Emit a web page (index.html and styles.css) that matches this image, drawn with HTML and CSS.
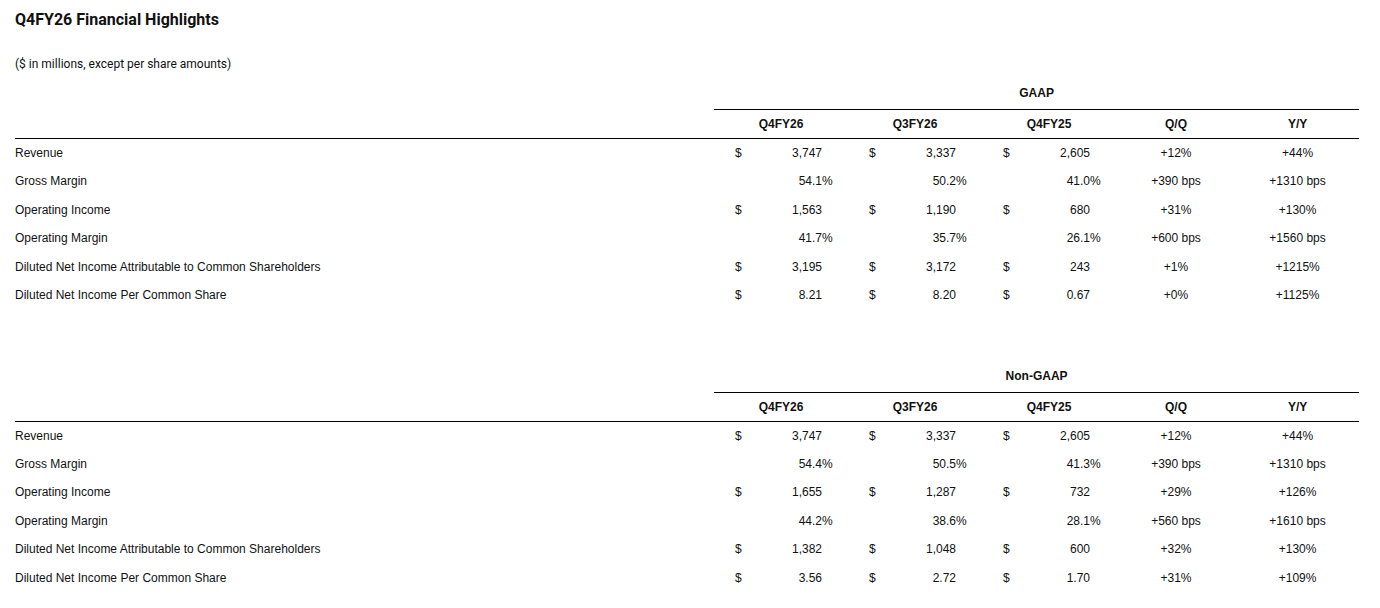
FILE: index.html
```html
<!DOCTYPE html>
<html lang="en">
<head>
<meta charset="utf-8">
<title>Q4FY26 Financial Highlights</title>
<link rel="stylesheet" href="styles.css">
</head>
<body>
<main class="page">
  <h1 class="title">Q4FY26 Financial Highlights</h1>
  <p class="note">($ in millions, except per share amounts)</p>

  <table class="fin">
    <colgroup>
      <col class="c-label">
      <col class="c-cur"><col class="c-num"><col class="c-suf">
      <col class="c-cur"><col class="c-num"><col class="c-suf">
      <col class="c-cur"><col class="c-num"><col class="c-suf">
      <col class="c-qq"><col class="c-yy">
    </colgroup>
    <thead>
      <tr class="group-row"><th class="blank"></th><th class="group" colspan="11">GAAP</th></tr>
      <tr class="head-row">
        <th class="blank"></th>
        <th colspan="3">Q4FY26</th><th colspan="3">Q3FY26</th><th colspan="3">Q4FY25</th>
        <th>Q/Q</th><th>Y/Y</th>
      </tr>
    </thead>
    <tbody>
      <tr><td class="label">Revenue</td><td class="cur">$</td><td class="num">3,747</td><td class="suf"></td><td class="cur">$</td><td class="num">3,337</td><td class="suf"></td><td class="cur">$</td><td class="num">2,605</td><td class="suf"></td><td class="chg">+12%</td><td class="chg">+44%</td></tr>
      <tr><td class="label">Gross Margin</td><td class="cur"></td><td class="num">54.1</td><td class="suf">%</td><td class="cur"></td><td class="num">50.2</td><td class="suf">%</td><td class="cur"></td><td class="num">41.0</td><td class="suf">%</td><td class="chg">+390 bps</td><td class="chg">+1310 bps</td></tr>
      <tr><td class="label">Operating Income</td><td class="cur">$</td><td class="num">1,563</td><td class="suf"></td><td class="cur">$</td><td class="num">1,190</td><td class="suf"></td><td class="cur">$</td><td class="num">680</td><td class="suf"></td><td class="chg">+31%</td><td class="chg">+130%</td></tr>
      <tr><td class="label">Operating Margin</td><td class="cur"></td><td class="num">41.7</td><td class="suf">%</td><td class="cur"></td><td class="num">35.7</td><td class="suf">%</td><td class="cur"></td><td class="num">26.1</td><td class="suf">%</td><td class="chg">+600 bps</td><td class="chg">+1560 bps</td></tr>
      <tr><td class="label">Diluted Net Income Attributable to Common Shareholders</td><td class="cur">$</td><td class="num">3,195</td><td class="suf"></td><td class="cur">$</td><td class="num">3,172</td><td class="suf"></td><td class="cur">$</td><td class="num">243</td><td class="suf"></td><td class="chg">+1%</td><td class="chg">+1215%</td></tr>
      <tr><td class="label">Diluted Net Income Per Common Share</td><td class="cur">$</td><td class="num">8.21</td><td class="suf"></td><td class="cur">$</td><td class="num">8.20</td><td class="suf"></td><td class="cur">$</td><td class="num">0.67</td><td class="suf"></td><td class="chg">+0%</td><td class="chg">+1125%</td></tr>
    </tbody>
  </table>

  <table class="fin fin-second">
    <colgroup>
      <col class="c-label">
      <col class="c-cur"><col class="c-num"><col class="c-suf">
      <col class="c-cur"><col class="c-num"><col class="c-suf">
      <col class="c-cur"><col class="c-num"><col class="c-suf">
      <col class="c-qq"><col class="c-yy">
    </colgroup>
    <thead>
      <tr class="group-row"><th class="blank"></th><th class="group" colspan="11">Non-GAAP</th></tr>
      <tr class="head-row">
        <th class="blank"></th>
        <th colspan="3">Q4FY26</th><th colspan="3">Q3FY26</th><th colspan="3">Q4FY25</th>
        <th>Q/Q</th><th>Y/Y</th>
      </tr>
    </thead>
    <tbody>
      <tr><td class="label">Revenue</td><td class="cur">$</td><td class="num">3,747</td><td class="suf"></td><td class="cur">$</td><td class="num">3,337</td><td class="suf"></td><td class="cur">$</td><td class="num">2,605</td><td class="suf"></td><td class="chg">+12%</td><td class="chg">+44%</td></tr>
      <tr><td class="label">Gross Margin</td><td class="cur"></td><td class="num">54.4</td><td class="suf">%</td><td class="cur"></td><td class="num">50.5</td><td class="suf">%</td><td class="cur"></td><td class="num">41.3</td><td class="suf">%</td><td class="chg">+390 bps</td><td class="chg">+1310 bps</td></tr>
      <tr><td class="label">Operating Income</td><td class="cur">$</td><td class="num">1,655</td><td class="suf"></td><td class="cur">$</td><td class="num">1,287</td><td class="suf"></td><td class="cur">$</td><td class="num">732</td><td class="suf"></td><td class="chg">+29%</td><td class="chg">+126%</td></tr>
      <tr><td class="label">Operating Margin</td><td class="cur"></td><td class="num">44.2</td><td class="suf">%</td><td class="cur"></td><td class="num">38.6</td><td class="suf">%</td><td class="cur"></td><td class="num">28.1</td><td class="suf">%</td><td class="chg">+560 bps</td><td class="chg">+1610 bps</td></tr>
      <tr><td class="label">Diluted Net Income Attributable to Common Shareholders</td><td class="cur">$</td><td class="num">1,382</td><td class="suf"></td><td class="cur">$</td><td class="num">1,048</td><td class="suf"></td><td class="cur">$</td><td class="num">600</td><td class="suf"></td><td class="chg">+32%</td><td class="chg">+130%</td></tr>
      <tr><td class="label">Diluted Net Income Per Common Share</td><td class="cur">$</td><td class="num">3.56</td><td class="suf"></td><td class="cur">$</td><td class="num">2.72</td><td class="suf"></td><td class="cur">$</td><td class="num">1.70</td><td class="suf"></td><td class="chg">+31%</td><td class="chg">+109%</td></tr>
    </tbody>
  </table>
</main>
</body>
</html>
```

FILE: styles.css
```css
html, body {
  margin: 0;
  padding: 0;
  background: #ffffff;
  color: #111111;
}

.page {
  padding: 10px 21px 0 15px;
}

.title {
  margin: 0;
  font-family: Roboto, "Liberation Sans", Arial, sans-serif;
  font-size: 16px;
  font-weight: 700;
  line-height: 20px;
}

.note {
  margin: 27px 0 0 0;
  font-family: Roboto, "Liberation Sans", Arial, sans-serif;
  font-size: 12px;
  line-height: 14px;
}

.fin {
  width: 1344px;
  table-layout: fixed;
  border-collapse: collapse;
  border-spacing: 0;
  margin-top: 8px;
  font-family: "Liberation Sans", Arial, sans-serif;
  font-size: 12px;
  line-height: 14px;
}

.fin-second {
  margin-top: 52px;
}

.c-label { width: 699px; }
.c-cur { width: 40px; }
.c-num { width: 68px; }
.c-suf { width: 26px; }
.c-qq { width: 120px; }
.c-yy { width: 123px; }

.fin th,
.fin td {
  padding: 0;
  white-space: nowrap;
}

.group-row th {
  height: 30px;
  padding: 7px 0 9px 0;
  box-sizing: border-box;
  font-weight: 700;
  text-align: center;
  vertical-align: middle;
}

.group-row .group {
  border-bottom: 1px solid #000;
}

.head-row th {
  height: 29px;
  box-sizing: border-box;
  font-weight: 700;
  text-align: center;
  vertical-align: middle;
  border-bottom: 1px solid #000;
}

.fin tbody td {
  height: 28.5px;
  box-sizing: border-box;
  vertical-align: middle;
}

.label {
  text-align: left;
}

.fin td.cur {
  text-align: left;
  padding-left: 21px;
}

.num {
  text-align: right;
}

.suf {
  text-align: left;
}

.chg {
  text-align: center;
}
```
